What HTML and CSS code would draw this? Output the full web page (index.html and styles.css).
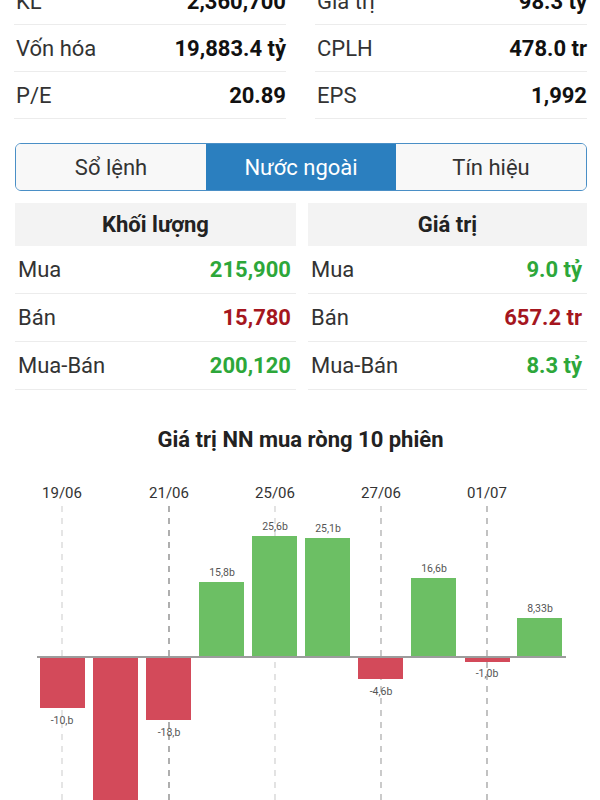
FILE: index.html
```html
<!DOCTYPE html>
<html lang="vi">
<head>
  <meta charset="UTF-8">
  <meta name="viewport" content="width=device-width, initial-scale=1.0">
  <title>Nước ngoài</title>
  <link rel="stylesheet" href="styles.css">
</head>
<body>
  <div class="page">
    <div class="stats">
      <div class="stat"><span>KL</span><b>2,360,700</b></div>
      <div class="stat"><span>Giá trị</span><b>98.3 tỷ</b></div>
      <div class="stat"><span>Vốn hóa</span><b>19,883.4 tỷ</b></div>
      <div class="stat"><span>CPLH</span><b>478.0 tr</b></div>
      <div class="stat"><span>P/E</span><b>20.89</b></div>
      <div class="stat"><span>EPS</span><b>1,992</b></div>
    </div>

    <div class="tabs">
      <div class="tab">Sổ lệnh</div>
      <div class="tab active">Nước ngoài</div>
      <div class="tab">Tín hiệu</div>
    </div>

    <div class="foreign">
      <div class="col">
        <div class="head">Khối lượng</div>
        <div class="row"><span>Mua</span><b class="up">215,900</b></div>
        <div class="row"><span>Bán</span><b class="down">15,780</b></div>
        <div class="row"><span>Mua-Bán</span><b class="up">200,120</b></div>
      </div>
      <div class="col">
        <div class="head">Giá trị</div>
        <div class="row"><span>Mua</span><b class="up">9.0 tỷ</b></div>
        <div class="row"><span>Bán</span><b class="down">657.2 tr</b></div>
        <div class="row"><span>Mua-Bán</span><b class="up">8.3 tỷ</b></div>
      </div>
    </div>

    <h3 class="chart-title">Giá trị NN mua ròng 10 phiên</h3>
  </div>

  <svg class="chart" width="600" height="330" viewBox="0 0 600 330">
    <g class="dates">
      <text x="62" y="28">19/06</text>
      <text x="169" y="28">21/06</text>
      <text x="275" y="28">25/06</text>
      <text x="381" y="28">27/06</text>
      <text x="487" y="28">01/07</text>
    </g>
    <g class="grid">
      <line x1="62" y1="36" x2="62" y2="330" stroke="#d4d4d4"/>
      <line x1="169" y1="36" x2="169" y2="330" stroke="#7a7a7a"/>
      <line x1="275" y1="36" x2="275" y2="330" stroke="#d0d0d0"/>
      <line x1="381" y1="36" x2="381" y2="330" stroke="#a8a8a8"/>
      <line x1="487" y1="36" x2="487" y2="330" stroke="#999"/>
    </g>
    <g class="bars">
      <rect class="neg" x="40" y="187" width="45" height="51"/>
      <rect class="neg" x="93" y="187" width="45" height="160"/>
      <rect class="neg" x="146" y="187" width="45" height="63"/>
      <rect class="pos" x="199" y="112" width="45" height="75"/>
      <rect class="pos" x="252" y="66" width="45" height="121"/>
      <rect class="pos" x="305" y="68" width="45" height="119"/>
      <rect class="neg" x="358" y="187" width="45" height="22"/>
      <rect class="pos" x="411" y="108" width="45" height="79"/>
      <rect class="neg" x="465" y="187" width="45" height="5"/>
      <rect class="pos" x="517" y="148" width="45" height="39"/>
    </g>
    <line x1="37" y1="187" x2="566" y2="187" stroke="#9c9c9c" stroke-width="2"/>
    <g class="values">
      <text x="62" y="254">-10,b</text>
      <text x="169" y="266">-18,b</text>
      <text x="222" y="106">15,8b</text>
      <text x="275" y="60">25,6b</text>
      <text x="328" y="62">25,1b</text>
      <text x="381" y="225">-4,6b</text>
      <text x="434" y="102">16,6b</text>
      <text x="487" y="207">-1,0b</text>
      <text x="540" y="142">8,33b</text>
    </g>
  </svg>
</body>
</html>
```

FILE: styles.css
```css
body {
  margin: 0;
  font-family: Roboto, "Noto Sans", sans-serif;
  color: #333;
  background: #fff;
  overflow: hidden;
}
.page {
  padding: 0 13px 0 14px;
}
.stats {
  display: grid;
  grid-template-columns: 1fr 1fr;
  column-gap: 29px;
  margin-top: -22px;
}
.stat {
  display: flex;
  justify-content: space-between;
  align-items: center;
  height: 46px;
  border-bottom: 1px solid #ececec;
  font-size: 22px;
}
.stat span {
  padding-left: 2px;
}
.stat b {
  color: #111;
}
.tabs {
  display: flex;
  box-sizing: border-box;
  margin-top: 24px;
  height: 48px;
  border: 1.5px solid #4a8fc6;
  border-radius: 6px;
  overflow: hidden;
  margin-left: 1px;
}
.tab {
  flex: 1;
  display: flex;
  align-items: center;
  justify-content: center;
  background: #f8f8f8;
  font-size: 22px;
  color: #333;
}
.tab.active {
  background: #2b7fbf;
  color: #fff;
}
.foreign {
  display: grid;
  grid-template-columns: 281px 1fr;
  column-gap: 12px;
  margin-top: 12px;
  margin-left: 1px;
}
.head {
  height: 43px;
  display: flex;
  align-items: center;
  justify-content: center;
  background: #f3f3f3;
  font-size: 22px;
  font-weight: bold;
  color: #222;
}
.row {
  display: flex;
  justify-content: space-between;
  align-items: center;
  height: 47px;
  border-bottom: 1px solid #ececec;
  padding: 0 5px 0 3px;
  font-size: 22px;
}
.up {
  color: #2da73a;
}
.down {
  color: #a5161e;
}
.chart-title {
  margin: 37px 0 0;
  text-align: center;
  font-size: 22px;
  line-height: 26px;
  font-weight: bold;
  color: #222;
}
.chart {
  display: block;
  margin-top: 17px;
}
.dates text {
  font-family: Roboto, sans-serif;
  font-size: 15px;
  fill: #333;
  text-anchor: middle;
}
.grid line {
  stroke-width: 1.2;
  stroke-dasharray: 6 6;
}
.pos {
  fill: #6cbf64;
}
.neg {
  fill: #d34a5a;
}
.values text {
  font-family: Roboto, sans-serif;
  font-size: 10.5px;
  fill: #555;
  text-anchor: middle;
}
```
